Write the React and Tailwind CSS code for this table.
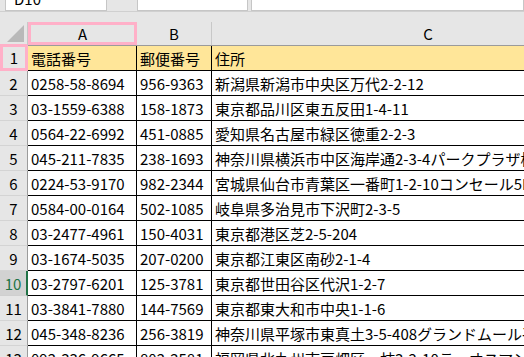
const rows = [
  ["0258-58-8694", "956-9363", "新潟県新潟市中央区万代2-2-12"],
  ["03-1559-6388", "158-1873", "東京都品川区東五反田1-4-11"],
  ["0564-22-6992", "451-0885", "愛知県名古屋市緑区徳重2-2-3"],
  ["045-211-7835", "238-1693", "神奈川県横浜市中区海岸通2-3-4パークプラザ横浜"],
  ["0224-53-9170", "982-2344", "宮城県仙台市青葉区一番町1-2-10コンセール5F"],
  ["0584-00-0164", "502-1085", "岐阜県多治見市下沢町2-3-5"],
  ["03-2477-4961", "150-4031", "東京都港区芝2-5-204"],
  ["03-1674-5035", "207-0200", "東京都江東区南砂2-1-4"],
  ["03-2797-6201", "125-3781", "東京都世田谷区代沢1-2-7"],
  ["03-3841-7880", "144-7569", "東京都東大和市中央1-1-6"],
  ["045-348-8236", "256-3819", "神奈川県平塚市東真土3-5-408グランドムール平塚"],
  ["092-336-9665", "802-2581", "福岡県北九州市戸畑区一枝3-2-10ラ・オスマン"],
];

const font = { fontFamily: '"Noto Sans CJK JP", "Noto Sans", sans-serif' };

export default function App() {
  return (
    <div className="w-[524px] h-[357px] overflow-hidden bg-[#e6e6e6] text-[15px] leading-none text-black" style={font}>
      {/* formula bar, mostly scrolled off the top */}
      <div className="flex items-end h-[12px] overflow-hidden border-b border-[#d0d0d0]">
        <div className="ml-[5px] w-[102px] h-[26px] shrink-0 bg-white border border-[#c6c6c6] flex items-center pl-[8px] text-[15px]">
          D10
        </div>
        <div className="w-[30px] shrink-0" />
        <div className="w-[111px] h-[26px] shrink-0 bg-white border border-[#c6c6c6]" />
        <div className="ml-[3px] flex-1 h-[26px] bg-white border border-[#c6c6c6]" />
      </div>
      <div className="h-[10px]" />

      {/* column headers */}
      <div className="grid grid-cols-[28px_109px_75px_432px] h-[24px] border-b border-[#9b9b9b]">
        <div className="relative border-r border-[#c8c8c8]">
          <div className="absolute right-[3px] bottom-[3px] w-0 h-0 border-l-[17px] border-l-transparent border-b-[17px] border-b-[#b9b9b9]" />
        </div>
        <div className="border-[3px] border-[#ffb0c8] flex items-center justify-center">A</div>
        <div className="border-r border-[#c8c8c8] flex items-center justify-center">B</div>
        <div className="flex items-center justify-center">C</div>
      </div>

      {/* header row 1 */}
      <div className="grid grid-cols-[28px_109px_75px_432px] h-[25px]">
        <div className="-mt-[2px] h-[27px] border-[3px] border-[#ffb0c8] bg-[#e6e6e6] flex items-center justify-center">1</div>
        <div className="bg-[#ffe699] border-r border-b border-black pl-[3px] flex items-center">電話番号</div>
        <div className="bg-[#ffe699] border-r border-b border-black pl-[3px] flex items-center">郵便番号</div>
        <div className="bg-[#ffe699] border-b border-black pl-[3px] flex items-center">住所</div>
      </div>

      {rows.map((r, i) => {
        const n = i + 2;
        const sel = n === 10;
        return (
          <div key={n} className="grid grid-cols-[28px_109px_75px_432px] h-[25px]">
            <div
              className={
                sel
                  ? "bg-[#d2d2d2] text-[#217346] border-r-2 border-[#217346] border-b border-b-[#cfcfcf] flex items-center justify-center"
                  : "bg-[#e6e6e6] border-r border-[#9b9b9b] border-b border-b-[#d4d4d4] flex items-center justify-center"
              }
            >
              {n}
            </div>
            <div className="bg-white border-r border-b border-black pl-[3px] flex items-center whitespace-nowrap overflow-hidden">{r[0]}</div>
            <div className="bg-white border-r border-b border-black pl-[3px] flex items-center whitespace-nowrap overflow-hidden">{r[1]}</div>
            <div className="bg-white border-b border-black pl-[3px] flex items-center whitespace-nowrap overflow-hidden">{r[2]}</div>
          </div>
        );
      })}
    </div>
  );
}
